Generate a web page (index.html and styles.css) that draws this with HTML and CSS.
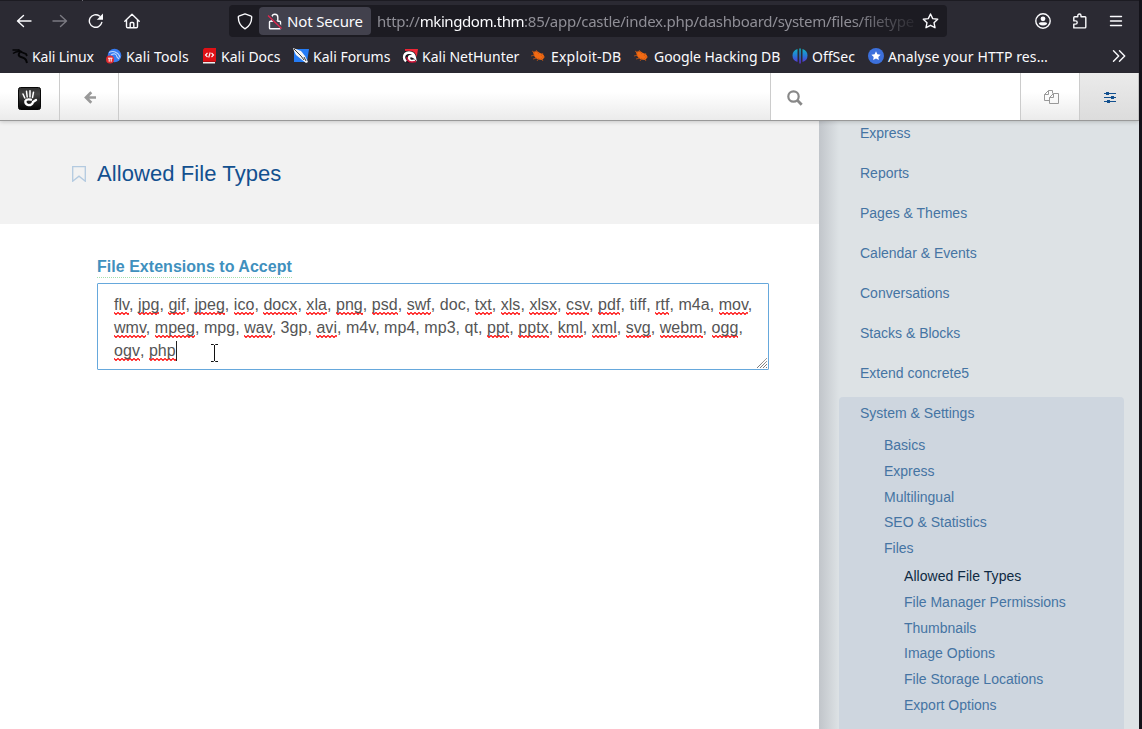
FILE: index.html
```html
<!DOCTYPE html>
<html lang="en">
<head>
<meta charset="utf-8">
<title>Allowed File Types</title>
<link rel="stylesheet" href="styles.css">
</head>
<body>
<div class="window">
  <header class="chrome">
    <div class="tab-edge"></div>
    <div class="navbar">
      <div class="nav-buttons">
        <svg width="16" height="16" viewBox="0 0 16 16" class="line"><path d="M15 8H1.8M7.500 2.500L1.500 8l6 5.500"/></svg>
        <svg width="16" height="16" viewBox="0 0 16 16" class="line dim"><path d="M1 8h13.2M8.500 2.500l6 5.500-6 5.500"/></svg>
        <svg width="16" height="16" viewBox="0 0 16 16" class="line"><path d="M13.800 9.400A6.300 6.300 0 1 1 11.500 3"/><path d="M15 .6v6.200H8.800z" fill="#fbfbfe" stroke="none"/></svg>
        <svg width="16" height="16" viewBox="0 0 16 16" class="line"><path d="M.8 8.200L8 1.300l7.200 6.900M2.500 7v6.600q0 1.200 1.200 1.200h8.600q1.200 0 1.200-1.200V7M6.200 14.500v-4q0-1 1-1h1.600q1 0 1 1v4"/></svg>
      </div>
      <div class="urlbar">
        <svg class="line shield" width="16" height="17" viewBox="0 0 16 17"><path d="M8 .9l6.200 2.300q.5 0 .5.900 0 8-6.700 11.800Q1.300 12.100 1.300 4.100q0-.8.5-.9z"/></svg>
        <div class="identity">
          <svg width="16" height="17" viewBox="0 0 16 17"><path class="line" d="M4.800 7V4.200a3 3 0 0 1 6 0V7M3.300 8.300h9.400q.8 0 .8.800v5.800q0 .8-.8.800H3.300q-.8 0-.8-.8V9.100q0-.8.8-.8z"/><path d="M1.500 2.200l13.500 13" stroke="#42414d" stroke-width="3"/><path d="M1 2.500l13.500 13" stroke="#e22850" stroke-width="1.300"/></svg>
          <span>Not Secure</span>
        </div>
        <div class="url">http://<b>mkingdom.thm</b>:85/app/castle/index.php/dashboard/system/files/filetype</div>
        <svg class="line star" width="17" height="16" viewBox="0 0 17 16"><path d="M8.500 1l2.200 4.600 5 .6-3.700 3.500 1 5-4.500-2.400-4.500 2.400 1-5L1.300 6.200l5-.6z"/></svg>
      </div>
      <div class="nav-tools">
        <svg width="16" height="16" viewBox="0 0 16 16" class="line"><circle cx="8" cy="8" r="7.200"/><circle cx="8" cy="5.800" r="2.400" fill="#fbfbfe" stroke="none"/><path d="M3.800 11q0-1.800 2-1.800h4.400q2 0 2 1.800Q8 14 3.800 11z" fill="#fbfbfe" stroke="none"/></svg>
        <svg width="16" height="16" viewBox="0 0 16 16" class="line"><path d="M1.800 14.900v-3.800h1.800a1.600 1.600 0 0 0 0-3.200H1.800V4.600q0-.8.800-.8h3.200V2.600a1.600 1.600 0 0 1 3.200 0v1.200h4q.8 0 .8.800v9.500q0 .8-.8.800z"/></svg>
        <svg width="14" height="12" viewBox="0 0 14 12" class="line"><path d="M1.500 1.500h11M1.500 6h11M1.500 10.500h11"/></svg>
      </div>
    </div>
    <nav class="bookmarks">
      <a class="bm bm-linux"><svg width="17" height="16" viewBox="0 0 17 16" fill="none" stroke="#050507"><path d="M.5 2h7M1 5.500Q5 2.500 10 4" stroke-width="1.500"/><path d="M8 4Q5 8 9 9t5 3l1 3" stroke-width="2"/><path d="M9 4l5 2 1 2M6 2l4 2" stroke-width="1.800"/></svg><span>Kali Linux</span></a>
      <a class="bm bm-tools"><svg width="16" height="16" viewBox="0 0 16 16"><circle cx="8.500" cy="7.500" r="6.800" fill="#367bf0"/><path d="M3 4.500q4-2 7 0 3 1 4 5M5 7q5-3 6 2l2 2" fill="none" stroke="#b9d4ff" stroke-width="1.200"/><circle cx="4" cy="11.500" r="4" fill="#e12b2f"/><path d="M2 10.200h4.500M3.200 10.200v3.500M5.200 10.200v3.500" stroke="#fff" fill="none"/></svg><span>Kali Tools</span></a>
      <a class="bm bm-docs"><svg width="13" height="16" viewBox="0 0 13 16"><path d="M1.500 0H13v13H0V1.500z" fill="#df1116"/><path d="M0 13h13v1H0z" fill="#b60d12"/><path d="M0 14h12v1.500H0z" fill="#eee"/><path d="M4.500 5L2.500 7l2 2M8.500 5l2 2-2 2M7.200 4.500l-1.500 5" fill="none" stroke="#fff" stroke-width="1.100"/></svg><span>Kali Docs</span></a>
      <a class="bm bm-forums"><svg width="16" height="16" viewBox="0 0 16 16"><path d="M1 1h15l-2 13H1z" fill="#257cf5"/><path d="M0 0l8 3 4 5 3 6-2 1-5-4-5-4-2-4z" fill="#f5f5f5"/><path d="M1 1l7 7 3 4M11 9l2 4" fill="none" stroke="#222" stroke-width=".9"/></svg><span>Kali Forums</span></a>
      <a class="bm bm-hunter"><svg width="16" height="16" viewBox="0 0 16 16"><path d="M3 1h13l-2 13H3z" fill="#ee2636"/><path d="M3 3q5-1 9 1 3 3 3 8l-6 3-7-1-2-4z" fill="#17161c"/><path d="M13 12.500q-6 1.500-6-2.500 0-2 2-2 2 0 4 2-1-5.500-6-5.500-5 .5-5 5 0 2 2 4" fill="none" stroke="#fff" stroke-width="2.400"/><path d="M5 9q0 5 5 5l4-.5" fill="none" stroke="#d3173e" stroke-width="1.500"/></svg><span>Kali NetHunter</span></a>
      <a class="bm bm-exploit"><svg width="15" height="14" viewBox="0 0 15 14"><path d="M2 3q4-2 7 1 5 1 4 5l-2 2Q3 11 2 3z" fill="#f26a13"/><path d="M0 7l4-1M2 10l4-1M5 1l3 4M12 4l-2 3M6 12l2-3M14 8h-3M1 2l3 2M12 12l-2-3" stroke="#c75512" stroke-width=".8"/></svg><span>Exploit-DB</span></a>
      <a class="bm bm-ghdb"><svg width="15" height="14" viewBox="0 0 15 14"><path d="M2 3q4-2 7 1 5 1 4 5l-2 2Q3 11 2 3z" fill="#f26a13"/><path d="M0 7l4-1M2 10l4-1M5 1l3 4M12 4l-2 3M6 12l2-3M14 8h-3M1 2l3 2M12 12l-2-3" stroke="#c75512" stroke-width=".8"/></svg><span>Google Hacking DB</span></a>
      <a class="bm bm-offsec"><svg width="16" height="16" viewBox="0 0 16 16"><defs><linearGradient id="os" x1="0" y1="0" x2="0" y2="1"><stop offset="0" stop-color="#10b6c4"/><stop offset=".5" stop-color="#2877d8"/><stop offset="1" stop-color="#6028d0"/></linearGradient></defs><path d="M5.500 1v13Q.5 12.500.5 7.500t5-6.500zM10.500 1v13q5-1.500 5-6.500t-5-6.500zM7.300.5h1.500v15H7.300z" fill="url(#os)"/></svg><span>OffSec</span></a>
      <a class="bm bm-analyse"><svg width="16" height="16" viewBox="0 0 16 16"><circle cx="8" cy="8" r="8" fill="#3c70dc"/><path d="M8 3.300l1.400 3 3.200.4-2.300 2.200.6 3.200L8 10.600l-2.900 1.500.6-3.200-2.300-2.200 3.200-.4z" fill="#fff"/></svg><span>Analyse your HTTP res…</span></a>
      <svg class="line more" width="14" height="12" viewBox="0 0 14 12"><path d="M1.500.8L6.700 6l-5.200 5.200M7.500.8L12.700 6l-5.200 5.200"/></svg>
    </nav>
  </header>

  <div class="page">
    <div class="toolbar">
      <div class="cell logo">
        <svg width="23" height="23" viewBox="0 0 23 23"><defs><linearGradient id="lg" x1="0" y1="0" x2="0" y2="1"><stop offset="0" stop-color="#303030"/><stop offset=".3" stop-color="#454545"/><stop offset=".65" stop-color="#202020"/><stop offset="1" stop-color="#050505"/></linearGradient></defs><rect x=".5" y=".5" width="22" height="22" rx="2" fill="url(#lg)" stroke="#080808"/><g fill="none" stroke="#fff" stroke-linecap="round"><path d="M5 7l1.800 4M8.500 4.300l.7 5.700M12 3.700v6.300M15.500 5.200l-1 5.300" stroke-width="1.500"/><path d="M13 12.700q-4.500-1-5.600 1.300-.5 3.200 3 4.200 4 0 4.600-3.200l3-2" stroke-width="2.300"/></g></svg>
      </div>
      <div class="cell back">
        <svg width="12" height="13" viewBox="0 0 12 13" fill="none" stroke="#999" stroke-width="2.700"><path d="M12 6.500H2.500M7.300 1.200L2 6.500l5.300 5.300"/></svg>
      </div>
      <div class="fill"></div>
      <div class="search"><svg width="16" height="16" viewBox="0 0 16 16" fill="none" stroke="#888"><circle cx="6.500" cy="6.500" r="5.200" stroke-width="2.200"/><path d="M10.300 10.300l4.400 4.400" stroke-width="2.800"/></svg></div>
      <div class="cell pages"><svg width="15" height="15" viewBox="0 0 15 15" fill="none" stroke="#999"><path d="M5.500 10.500h-5v-6l4-4h4v3M4.500.5v4h-4M9.500 3.500h5v10h-9v-6zM9.500 3.500v4h-4"/></svg></div>
      <div class="cell settings"><svg width="12" height="12" viewBox="0 0 12 12" fill="none" stroke="#12508f"><path d="M0 1.500h12M0 5.500h12M0 9.500h12" stroke-width="1"/><path d="M2 1.500h3M7 5.500h3M3 9.500h3" stroke-width="3"/></svg></div>
    </div>
    <div class="content">
      <main class="main">
        <div class="title-bar">
          <svg width="14" height="16" viewBox="0 0 14 16" fill="none" stroke="#b3cae0" stroke-width="1.300"><path d="M.7.700h12.600v14.500L7 10.200.7 15.200z"/></svg>
          <h1>Allowed File Types</h1>
        </div>
        <div class="form">
          <label class="label">File Extensions to Accept</label>
          <div class="textarea">
            <div><i>flv</i>, <i>jpg</i>, <i>gif</i>, <i>jpeg</i>, <i>ico</i>, <i>docx</i>, <i>xla</i>, <i>png</i>, <i>psd</i>, <i>swf</i>, doc, <i>txt</i>, <i>xls</i>, <i>xlsx</i>, <i>csv</i>, <i>pdf</i>, tiff, <i>rtf</i>, m4a, <i>mov</i>,</div>
            <div><i>wmv</i>, <i>mpeg</i>, mpg, <i>wav</i>, 3gp, <i>avi</i>, m4v, mp4, mp3, qt, <i>ppt</i>, <i>pptx</i>, <i>kml</i>, <i>xml</i>, <i>svg</i>, <i>webm</i>, <i>ogg</i>,</div>
            <div class="last"><i>ogv</i>, <i>php</i><span class="caret"></span></div>
            <svg class="pointer" width="9" height="20" viewBox="0 0 9 20" fill="none"><path d="M1 1.500h2.500l1 1 1-1H8M1 18.500h2.500l1-1 1 1H8M4.500 2v16" stroke="#fff" stroke-width="3"/><path d="M1 1.500h2.500l1 1 1-1H8M1 18.500h2.500l1-1 1 1H8M4.500 2v16" stroke="#111"/></svg>
            <svg class="grip" width="11" height="10" viewBox="0 0 11 10" stroke="#666" stroke-dasharray="1.200 .3"><path d="M0 10L10 0M3 10l7-7M6 10l4-4M9 10l1-1"/></svg>
          </div>
        </div>
      </main>
      <aside class="sidebar">
        <ul class="menu">
          <li>Express</li><li>Reports</li><li>Pages &amp; Themes</li><li>Calendar &amp; Events</li><li>Conversations</li><li>Stacks &amp; Blocks</li><li>Extend concrete5</li>
        </ul>
        <div class="active-group">
          <div class="group-title">System &amp; Settings</div>
          <ul class="sub"><li>Basics</li><li>Express</li><li>Multilingual</li><li>SEO &amp; Statistics</li><li>Files</li></ul>
          <ul class="sub deep"><li class="current">Allowed File Types</li><li>File Manager Permissions</li><li>Thumbnails</li><li>Image Options</li><li>File Storage Locations</li><li>Export Options</li></ul>
        </div>
      </aside>
    </div>
  </div>
</div>
</body>
</html>
```
FILE: styles.css
```css
* { box-sizing: border-box; }
body { margin: 0; background: #14131a; font-family: "Liberation Sans", Arial, sans-serif; }
ul { list-style: none; margin: 0; padding: 0; }
svg { flex: none; display: block; }
.window { width: 1142px; height: 729px; overflow: hidden; padding-right: 3px; display: flex; flex-direction: column; }
.line { fill: none; stroke: #fbfbfe; stroke-width: 1.4; stroke-linejoin: round; stroke-linecap: round; }
.dim { stroke: #7b7a82; }

.chrome { height: 73px; background: #2b2a33; color: #fbfbfe; font-family: "Noto Sans", sans-serif; flex: none; }
.tab-edge { height: 1px; background: linear-gradient(to right, #1c1b22 82px, #6a6972 82px, #6a6972 83px, #1c1b22 83px); }
.navbar { height: 40px; display: flex; align-items: center; }
.nav-buttons { display: flex; gap: 20px; padding-left: 16px; width: 229px; }
.urlbar { width: 718px; height: 32px; background: #1c1b22; border-radius: 4px; display: flex; align-items: center; }
.shield { margin-left: 8px; }
.identity { margin-left: 6px; width: 112px; height: 28px; border-radius: 4px; background: #42414d; display: flex; align-items: center; gap: 4px; padding-left: 8px; font-size: 15px; letter-spacing: -.15px; white-space: nowrap; }
.url { margin-left: 6px; width: 542px; white-space: nowrap; font-size: 15px; letter-spacing: -.26px; color: #8f8e96; -webkit-mask-image: linear-gradient(to right, #000 475px, transparent 545px); mask-image: linear-gradient(to right, #000 475px, transparent 545px); }
.url b { font-weight: 400; color: #fbfbfe; letter-spacing: -.42px; }
.star { margin-left: 3px; }
.nav-tools { display: flex; align-items: center; gap: 21px; margin-left: 88px; }
.bookmarks { display: flex; align-items: center; height: 30px; padding-left: 12px; font-size: 14px; white-space: nowrap; }
.bm { display: flex; align-items: center; gap: 4px; flex: none; }
.bm-linux { width: 94px; gap: 3px; letter-spacing: -.12px; }
.bm-tools { width: 97px; letter-spacing: .13px; }
.bm-docs { width: 90px; gap: 5px; }
.bm-forums { width: 109px; }
.bm-hunter { width: 129px; }
.bm-exploit { width: 103px; gap: 5px; letter-spacing: .2px; }
.bm-ghdb { width: 158px; gap: 5px; letter-spacing: -.05px; }
.bm-offsec { width: 76px; }
.bm-analyse { width: 244px; letter-spacing: .1px; }

.page { flex: 1; min-height: 0; display: flex; flex-direction: column; background: #fff; }
.toolbar { height: 47px; flex: none; display: flex; box-sizing: content-box; border-bottom: 1px solid #999; background: linear-gradient(#fff 40%, #ebebeb); box-shadow: 0 1px 4px rgba(0,0,0,.18); z-index: 1; }
.cell { display: flex; align-items: center; justify-content: center; border-right: 1px solid #ccc; }
.logo { width: 60px; padding-top: 3px; }
.back { width: 59px; padding: 2px 0 0 2px; }
.fill { flex: 1; }
.search { width: 251px; background: #fff; border-left: 1px solid #ccc; border-right: 1px solid #ccc; padding: 17px 0 0 16px; }
.pages { width: 59px; padding: 1px 0 0 2px; }
.settings { width: 59px; border-right: 1px solid #c4c4c4; padding: 2px 0 0 2px; background: linear-gradient(#ebebeb, #dcdcdc); }

.content { flex: 1; min-height: 0; display: flex; }
.main { width: 819px; }
.title-bar { height: 103px; background: #f2f2f2; display: flex; align-items: center; padding: 2px 0 0 72px; gap: 11px; }
.title-bar h1 { margin: 0; font-size: 22px; font-weight: 400; line-height: 26px; letter-spacing: .08px; color: #12508f; }
.form { padding: 33px 50px 0 97px; }
.label { display: block; width: max-content; font-weight: 700; font-size: 16px; line-height: 20px; height: 21px; letter-spacing: .03px; color: #4090be; border-bottom: 1px dotted #a5dfae; margin-bottom: 5px; }
.textarea { position: relative; height: 87px; border: 1px solid #66a8dc; border-radius: 1px; padding: 9px 0 0 16px; font-size: 16px; line-height: 23px; letter-spacing: .042px; color: #555; white-space: nowrap; }
.textarea i { font-style: normal; padding-bottom: 2px; background: url("data:image/svg+xml,%3Csvg xmlns='http://www.w3.org/2000/svg' width='4' height='3'%3E%3Cpath d='M-2 2.500L0 .5 2 2.500 4 .5 6 2.500' fill='none' stroke='%23f00' stroke-width='1.100'/%3E%3C/svg%3E") repeat-x left bottom; }
.last { display: flex; white-space: pre; }
.last i { height: 23px; background-position: left 0 bottom 1px; padding: 0; }
.caret { width: 1px; height: 20px; margin-top: 2px; background: #222; }
.pointer { position: absolute; left: 112px; top: 59px; }
.grip { position: absolute; right: 0; bottom: 1px; }

.sidebar { width: 320px; padding-left: 20px; background: linear-gradient(to right, #c1c5ca, #dde2e5 20px); color: #4574a3; font-size: 14px; }
.menu { padding-left: 21px; margin-top: -8px; }
.menu li { height: 40px; line-height: 40px; }
.active-group { width: 285px; height: 340px; margin-top: 4px; padding-left: 21px; background: #ced6df; border-radius: 4px 4px 0 0; }
.group-title { height: 35px; line-height: 32px; }
.sub { padding-left: 24px; }
.sub li { height: 25.8px; line-height: 26px; }
.deep { padding-left: 44px; margin-top: 2px; }
.current { color: #0f2a43; letter-spacing: .05px; }
```
